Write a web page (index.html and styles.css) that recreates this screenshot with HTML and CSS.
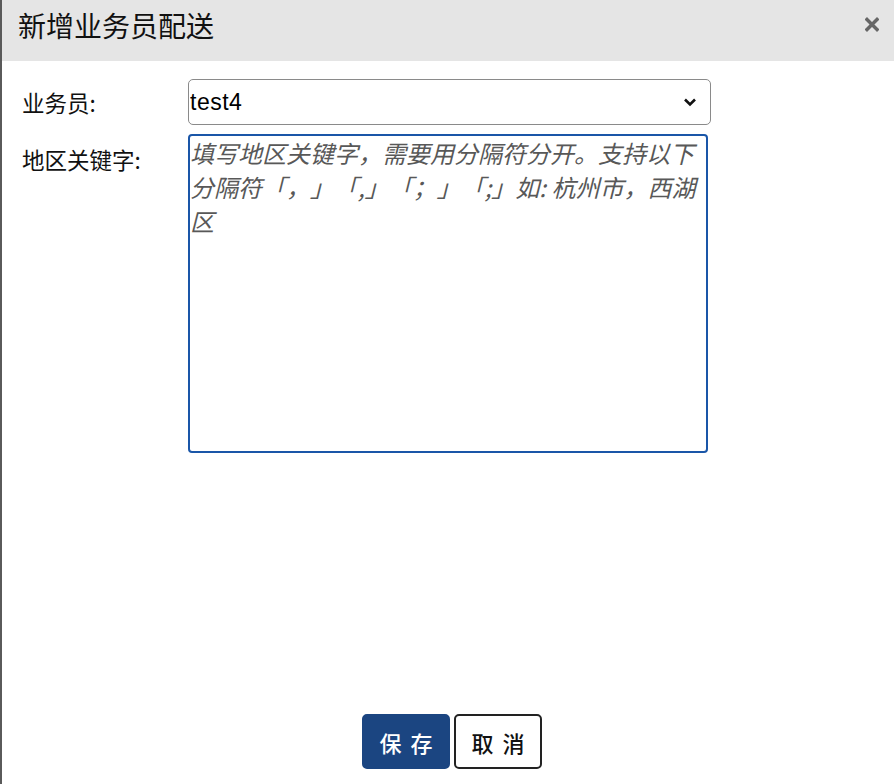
FILE: index.html
```html
<!DOCTYPE html>
<html lang="zh-CN">
<head>
	<meta charset="UTF-8">
	<title>新增业务员配送</title>
	<link rel="stylesheet" href="styles.css">
</head>
<body>
	<div class="dialog">
		<div class="head">
			<h3>新增业务员配送</h3>
			<span class="close">
				<svg width="14" height="15" viewBox="0 0 14 15"><path d="M2 2.5 L12 12.5 M12 2.5 L2 12.5" stroke="#666" stroke-width="3.4" stroke-linecap="square"/></svg>
			</span>
		</div>
		<div class="body">
			<div class="row">
				<label>业务员:</label>
				<div class="select">
					<select>
						<option>test4</option>
					</select>
					<svg class="arrow" width="14" height="10" viewBox="0 0 14 10"><path d="M2 2.5 L7 7.5 L12 2.5" fill="none" stroke="#111" stroke-width="2.6"/></svg>
				</div>
			</div>
			<div class="row">
				<label>地区关键字:</label>
				<textarea placeholder="填写地区关键字，需要用分隔符分开。支持以下分隔符「，」「,」「；」「;」如: 杭州市，西湖区"></textarea>
			</div>
		</div>
		<div class="foot">
			<button class="btn save">保存</button>
			<button class="btn cancel">取消</button>
		</div>
	</div>
</body>
</html>
```

FILE: styles.css
```css
* { margin: 0; padding: 0; box-sizing: border-box; }
body {
	font-family: "Liberation Sans", "Noto Sans CJK SC", sans-serif;
	background: #fff;
}
.dialog {
	height: 100vh;
	border-left: 2px solid #5a5a5a;
	display: flex;
	flex-direction: column;
}
.head {
	height: 61px;
	background: #e5e5e5;
	display: flex;
	justify-content: space-between;
	padding: 11px 15px 0 16px;
}
.head h3 {
	font: normal 28px/28px "Noto Sans CJK SC", sans-serif;
	color: #111;
}
.head .close {
	padding-top: 6px;
	cursor: pointer;
}
.body {
	flex: 1;
	padding: 18px 0 0 20px;
	display: flex;
	flex-direction: column;
	row-gap: 9px;
}
.row {
	display: flex;
}
.row label {
	width: 166px;
	font: 22.5px/46px "Noto Sans CJK SC", sans-serif;
	color: #111;
}
.row:last-child label {
	padding-top: 2px;
}
.select {
	position: relative;
	width: 523px;
}
.select select {
	appearance: none;
	width: 100%;
	height: 46px;
	border: 1px solid #8a8a8a;
	border-radius: 5px;
	background: #fff;
	padding: 0 1px;
	font: 23px "Liberation Sans", sans-serif;
	letter-spacing: .5px;
	color: #000;
}
.select .arrow {
	position: absolute;
	right: 14px;
	top: 18px;
	pointer-events: none;
}
.row textarea {
	width: 520px;
	height: 319px;
	border: 2px solid #1a56a8;
	border-radius: 4px;
	padding: 0 1px 0 0;
	resize: none;
	outline: none;
	font: 24px/34px "Noto Sans CJK SC", sans-serif;
	text-spacing-trim: space-all;
}
.row textarea::placeholder {
	color: #585858;
	font-style: italic;
}
.foot {
	display: flex;
	justify-content: center;
	column-gap: 4px;
	padding: 0 0 15px 8px;
}
.btn {
	width: 88px;
	height: 55px;
	border-radius: 5px;
	font: 500 22px "Noto Sans CJK SC", sans-serif;
	letter-spacing: 9px;
	text-indent: 9px;
	cursor: pointer;
}
.btn.save {
	background: #1b4581;
	border: 2px solid #1b4581;
	color: #fff;
}
.btn.cancel {
	background: #fff;
	border: 2px solid #222;
	color: #111;
}
```
